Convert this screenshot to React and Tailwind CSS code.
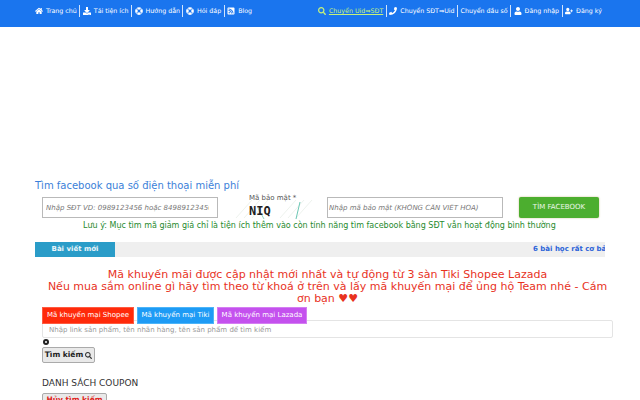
import React from "react";
import { FaHome, FaDownload, FaLifeRing, FaRssSquare, FaSearch, FaPhone, FaUser, FaUserPlus } from "react-icons/fa";

const Sep = () => <span className="mx-[1.5px] h-[12px] w-px bg-white/80" />;
const Item = ({ icon: Icon, children }) => (
  <span className="flex items-center gap-[3px] whitespace-nowrap">
    <Icon className="text-[8px]" />
    <span>{children}</span>
  </span>
);

export default function App() {
  return (
    <div className="h-[400px] w-[640px] overflow-hidden bg-white font-['DejaVu_Sans',sans-serif]">
      <header className="flex h-[27px] items-center bg-[#1a75ee] pb-[5px] pl-[35px] pr-[38px] text-[6.3px] text-white">
        <div className="flex items-center gap-[1px]">
          <Item icon={FaHome}>Trang chủ</Item>
          <Sep />
          <Item icon={FaDownload}>Tải tiện ích</Item>
          <Sep />
          <Item icon={FaLifeRing}>Hướng dẫn</Item>
          <Sep />
          <Item icon={FaLifeRing}>Hỏi đáp</Item>
          <Sep />
          <Item icon={FaRssSquare}>Blog</Item>
        </div>
        <div className="ml-auto flex items-center gap-[1px]">
          <span className="flex items-center gap-[3px] whitespace-nowrap text-[#c6f27a]">
            <FaSearch className="text-[8px]" />
            <span className="underline">Chuyển Uid⇒SĐT</span>
          </span>
          <Sep />
          <Item icon={FaPhone}>Chuyển SĐT⇒Uid</Item>
          <Sep />
          <span className="whitespace-nowrap">Chuyển đầu số</span>
          <Sep />
          <Item icon={FaUser}>Đăng nhập</Item>
          <Sep />
          <Item icon={FaUserPlus}>Đăng ký</Item>
        </div>
      </header>

      <main className="pt-[152px]">
        <h2 className="pl-[35px] text-[10px] leading-[14px] text-[#3b7fd9]">Tìm facebook qua số điện thoại miễn phí</h2>

        <div className="mt-[4px] flex items-start pl-[42px]">
          <input
            readOnly
            placeholder="Nhập SĐT VD: 0989123456 hoặc 84989123456"
            className="h-[21px] w-[176px] border border-[#b9b9b9] pl-[3px] pr-[8px] text-[7px] italic outline-none placeholder:text-[#777]"
          />
          <div className="relative ml-[31px] h-[21px] w-[78px]">
            <svg viewBox="0 0 82 24" className="absolute -left-[17px] top-[-1px] h-[24px] w-[82px]">
              <path d="M4 22 20 4M12 22 28 4M20 22 36 4M48 22 64 4M56 22 72 4M64 22 80 4" stroke="#eef3ee" strokeWidth="1" />
              <path d="M26 12 32 23" stroke="#8fd6c6" strokeWidth="1" />
              <path d="M68 6 64 23" stroke="#6cc7b4" strokeWidth="1" />
            </svg>
            <div className="relative -mt-[3px] whitespace-nowrap text-[7px] leading-[8px] text-[#555]">Mã bảo mật *</div>
            <span className="absolute left-0 top-[7px] font-['DejaVu_Sans_Mono',monospace] text-[12px] font-bold leading-[14px] text-[#222]">NIQ</span>
          </div>
          <input
            readOnly
            placeholder="Nhập mã bảo mật (KHÔNG CẦN VIẾT HOA)"
            className="h-[21px] w-[176px] border border-[#b9b9b9] px-[1px] text-[7px] italic outline-none placeholder:text-[#777]"
          />
          <button className="ml-[16px] h-[21px] w-[80px] rounded-[2px] bg-[#4cae2f] text-[7px] text-white/90 shadow-[0_0_2px_#c9b98a]">TÌM FACEBOOK</button>
        </div>

        <p className="mt-[3px] pl-[83px] text-[8px] leading-[10px] whitespace-nowrap text-[#1f8a2e]">Lưu ý: Mục tìm mã giảm giá chỉ là tiện ích thêm vào còn tính năng tìm facebook bằng SĐT vẫn hoạt động bình thường</p>

        <div className="ml-[35px] mt-[11px] flex h-[15px] w-[570px] items-center overflow-hidden bg-[#efefef] text-[7px] font-bold">
          <div className="flex h-full w-[80px] shrink-0 items-center justify-center bg-[#2a9cc8] text-white/90">Bài viết mới</div>
          <div className="ml-[418px] shrink-0 whitespace-nowrap text-[#2a62d8]">6 bài học rất cơ bản</div>
        </div>

        <div className="ml-[42px] mt-[12px] w-[571px] text-center text-[11px] leading-[12px] text-[#e8321e]">
          <p>Mã khuyến mãi được cập nhật mới nhất và tự động từ 3 sàn Tiki Shopee Lazada</p>
          <p>Nếu mua sắm online gì hãy tìm theo từ khoá ở trên và lấy mã khuyến mại để ủng hộ Team nhé - Cám ơn bạn ♥♥</p>
        </div>

        <div className="relative z-10 ml-[42px] mt-[2px] flex gap-[3px] text-[7px] text-white">
          <span className="flex h-[17px] w-[92px] items-center justify-center border border-[#ff5a40] bg-[#ff2a0a]">Mã khuyến mại Shopee</span>
          <span className="flex h-[17px] w-[77px] items-center justify-center border border-[#4cb4f8] bg-[#1e9bf5]">Mã khuyến mại Tiki</span>
          <span className="flex h-[17px] w-[90px] items-center justify-center border border-[#d47ef2] bg-[#c451ee]">Mã khuyến mại Lazada</span>
        </div>

        <input
          readOnly
          placeholder="Nhập link sản phẩm, tên nhãn hàng, tên sản phẩm để tìm kiếm"
          className="-mt-[4px] ml-[42px] block h-[18px] w-[571px] rounded-[2px] border border-[#e4e4e4] pl-[6px] pr-[6px] pt-[1px] text-[7px] outline-none placeholder:text-[#999]"
        />

        <div className="ml-[43px] mt-[1px] flex h-[6px] w-[6px] items-center justify-center rounded-full bg-[#222]">
          <span className="h-[2px] w-[2px] rounded-full bg-white" />
        </div>

        <button className="ml-[42px] mt-[2px] flex h-[16px] w-[53px] items-center justify-center gap-[2px] rounded-[2px] border border-[#aaa] bg-[#e9e9e9] text-[7.5px] font-bold text-[#222]">
          Tìm kiếm <FaSearch className="text-[7px] text-[#333]" />
        </button>

        <h3 className="ml-[42px] mt-[14px] text-[9px] leading-[12px] text-[#333]">DANH SÁCH COUPON</h3>

        <button className="ml-[42px] mt-[4px] flex h-[15px] w-[65px] items-start justify-center rounded-[2px] border border-[#aaa] bg-[#e9e9e9] text-[7.5px] leading-[11px] font-bold text-[#e0231a]">
          Hủy tìm kiếm
        </button>
      </main>
    </div>
  );
}
